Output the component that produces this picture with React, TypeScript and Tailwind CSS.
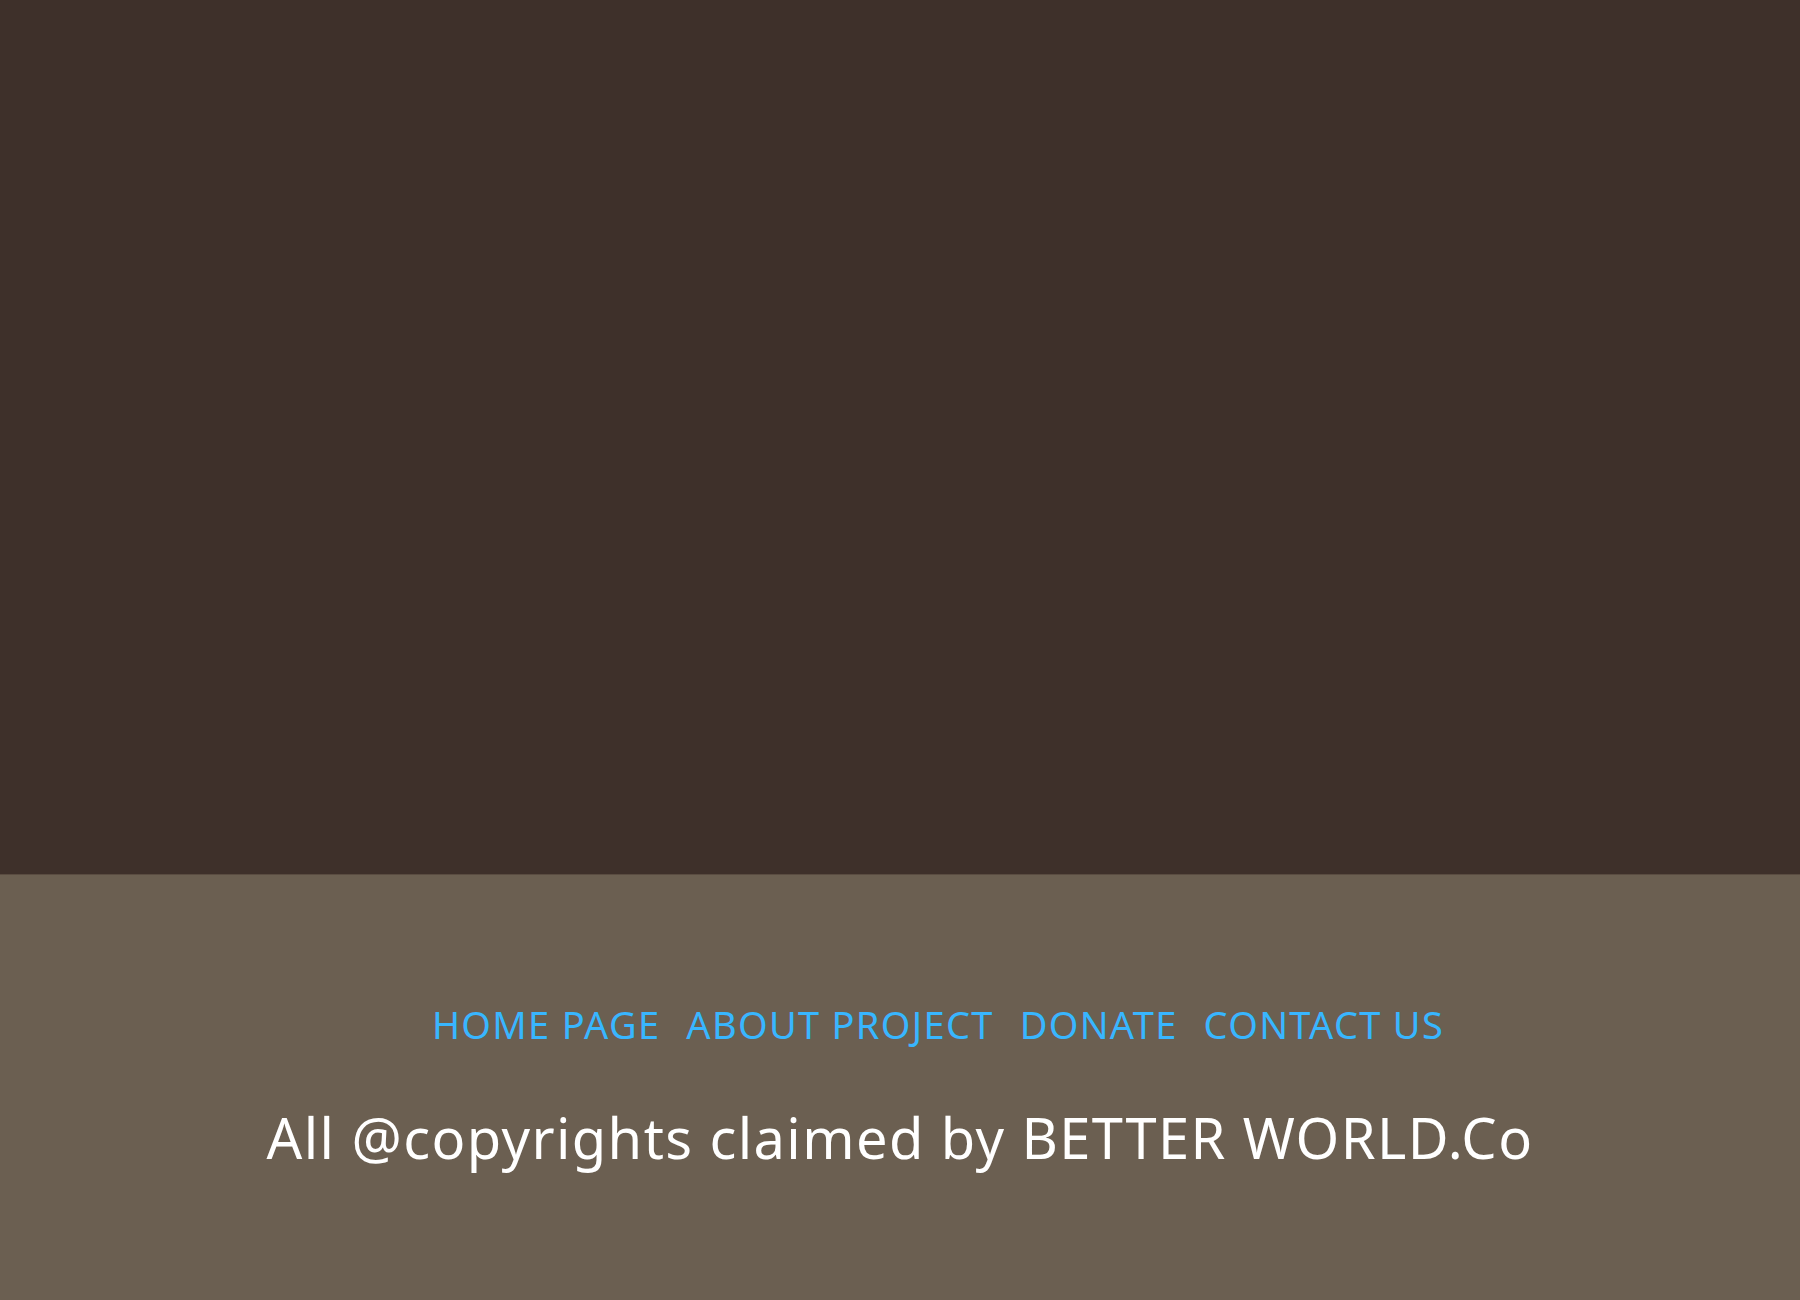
const links = ["HOME PAGE", "ABOUT PROJECT", "DONATE", "CONTACT US"];

export default function App() {
  return (
    <div className="flex min-h-[1300px] w-full flex-col font-['Noto_Sans',sans-serif]">
      <section className="h-[874px] bg-[#3e302a]" />
      <footer className="flex flex-1 flex-col items-center border-t border-[#5a4c41] bg-[#6b5f51] pt-[130px]">
        <nav className="ml-[76px] flex items-center gap-[26px]">
          {links.map((link) => (
            <a key={link} href="#" className="text-[38px] leading-[38px] tracking-[1.3px] text-[#38b6ff]">
              {link}
            </a>
          ))}
        </nav>
        <p className="mt-[66px] text-[56px] leading-[56px] tracking-[1.4px] text-white">
          All @copyrights claimed by BETTER WORLD.Co
        </p>
      </footer>
    </div>
  );
}
